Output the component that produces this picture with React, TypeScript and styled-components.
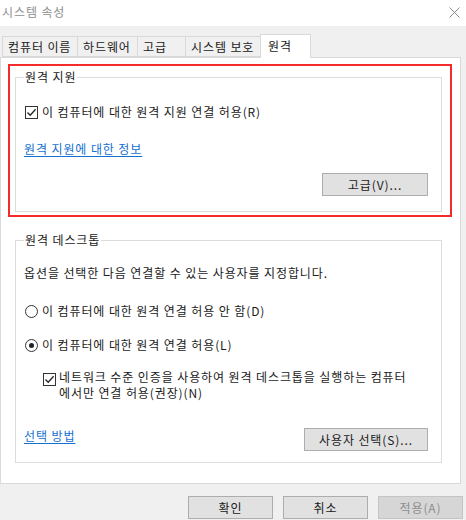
import React from "react";
import styled, { createGlobalStyle } from "styled-components";

const Global = createGlobalStyle`
  html, body { margin: 0; padding: 0; }
  body {
    width: 466px;
    height: 520px;
    overflow: hidden;
    background: #f0f0f0;
    font-family: "Noto Sans CJK KR", "Noto Sans", sans-serif;
    font-size: 12px;
    letter-spacing: 0.9px;
    color: #1a1a1a;
  }
  * { box-sizing: border-box; }
`;

const Window = styled.div`
  width: 466px;
  height: 520px;
  display: flex;
  flex-direction: column;
  background: #f0f0f0;
  overflow: hidden;
`;

const TitleBar = styled.div`
  height: 26px;
  flex: none;
  background: #ffffff;
  display: flex;
  align-items: center;
  justify-content: space-between;
  padding: 0 6px 2px 2px;
  color: #8f8f8f;
  line-height: 16px;
`;

const Body = styled.div`
  display: flex;
  flex-direction: column;
  padding-top: 8px;
`;

const TabStrip = styled.div`
  display: flex;
  align-items: flex-end;
  padding-left: 2px;
  height: 23px;
`;

const Tab = styled.div<{ $w: number; $active?: boolean }>`
  width: ${(p) => p.$w}px;
  height: ${(p) => (p.$active ? 24 : 21)}px;
  margin-left: -1px;
  margin-bottom: ${(p) => (p.$active ? -1 : 0)}px;
  padding: 0 0 ${(p) => (p.$active ? 2 : 0)}px ${(p) => (p.$active ? 7 : 5)}px;
  border: 1px solid #d9d9d9;
  border-bottom: ${(p) => (p.$active ? "none" : "1px solid #d9d9d9")};
  background: ${(p) => (p.$active ? "#ffffff" : "#f0f0f0")};
  position: ${(p) => (p.$active ? "relative" : "static")};
  display: flex;
  align-items: center;
  line-height: 16px;
  white-space: nowrap;
  &:first-child { margin-left: 0; }
`;

const Panel = styled.div`
  width: 461px;
  height: 427px;
  background: #ffffff;
  border: 1px solid #d9d9d9;
  padding: 6px 0 0 7px;
  display: flex;
  flex-direction: column;
`;

const Highlight = styled.div`
  width: 444px;
  border: 2px solid #f52b2b;
  padding: 3px 8px 3px 5px;
`;

const Group = styled.fieldset<{ $mt?: number; $pb: number }>`
  width: 427px;
  margin: ${(p) => p.$mt ?? 0}px 0 0 ${(p) => (p.$mt ? 7 : 0)}px;
  padding: 0 13px ${(p) => p.$pb}px 8px;
  border: 1px solid #dcdcdc;
  display: flex;
  flex-direction: column;
  min-width: 0;
`;

const Legend = styled.legend`
  padding: 0 1px;
  line-height: 16px;
`;

const Row = styled.div<{ $mt: number; $indent?: number }>`
  display: flex;
  align-items: center;
  gap: 4px;
  margin-top: ${(p) => p.$mt}px;
  margin-left: ${(p) => p.$indent ?? 1}px;
  line-height: 16px;
  white-space: nowrap;
`;

const TopRow = styled(Row)`
  align-items: flex-start;
  gap: 3px;
  white-space: normal;
`;

const Text = styled.p<{ $mt: number }>`
  margin: ${(p) => p.$mt}px 0 0 0;
  line-height: 16px;
  white-space: nowrap;
`;

const LinkText = styled.a<{ $mt?: number; $pb?: number }>`
  display: block;
  margin-top: ${(p) => p.$mt ?? 0}px;
  padding-bottom: ${(p) => p.$pb ?? 0}px;
  line-height: 16px;
  color: #1570d0;
  text-decoration: underline;
  text-underline-offset: 2px;
  cursor: pointer;
  align-self: flex-start;
`;

const Box = styled.span<{ $round?: boolean; $mt?: number }>`
  flex: none;
  width: 13px;
  height: 13px;
  margin-top: ${(p) => p.$mt ?? 0}px;
  border: 1px solid #333333;
  border-radius: ${(p) => (p.$round ? "50%" : "0")};
  background: #ffffff;
  display: flex;
  align-items: center;
  justify-content: center;
`;

const Dot = styled.span`
  width: 5px;
  height: 5px;
  border-radius: 50%;
  background: #222222;
`;

const Button = styled.button<{ $w: number; $disabled?: boolean }>`
  width: ${(p) => p.$w}px;
  height: 23px;
  padding: 0;
  border: 1px solid ${(p) => (p.$disabled ? "#c4c4c4" : "#adadad")};
  background: ${(p) => (p.$disabled ? "#d6d6d6" : "#e1e1e1")};
  color: ${(p) => (p.$disabled ? "#8d8d8d" : "#1a1a1a")};
  font-family: inherit;
  font-size: 12px;
  letter-spacing: inherit;
  line-height: 16px;
  flex: none;
`;

const ButtonRow = styled.div<{ $mt: number }>`
  display: flex;
  justify-content: flex-end;
  margin-top: ${(p) => p.$mt}px;
`;

const SplitRow = styled.div<{ $mt: number }>`
  display: flex;
  justify-content: space-between;
  align-items: flex-end;
  margin-top: ${(p) => p.$mt}px;
`;

const Footer = styled.div`
  display: flex;
  justify-content: flex-end;
  gap: 10px;
  padding-right: 3px;
  margin-top: 12px;
`;

const Check = () => (
  <svg width="11" height="11" viewBox="0 0 11 11">
    <path d="M1.5 5.5 L4.2 8.3 L9.6 2.2" fill="none" stroke="#222" strokeWidth="1.3" />
  </svg>
);

const CloseIcon = () => (
  <svg width="11" height="11" viewBox="0 0 11 11">
    <path d="M0.5 0.5 L10.5 10.5 M10.5 0.5 L0.5 10.5" stroke="#8a8a8a" strokeWidth="1" />
  </svg>
);

export default function App() {
  return (
    <>
      <Global />
      <Window>
        <TitleBar>
          <span>시스템 속성</span>
          <CloseIcon />
        </TitleBar>
        <Body>
          <TabStrip>
            <Tab $w={76}>컴퓨터 이름</Tab>
            <Tab $w={61}>하드웨어</Tab>
            <Tab $w={49}>고급</Tab>
            <Tab $w={76}>시스템 보호</Tab>
            <Tab $w={51} $active>원격</Tab>
          </TabStrip>
          <Panel>
            <Highlight>
              <Group $pb={15}>
                <Legend>원격 지원</Legend>
                <Row $mt={19}>
                  <Box><Check /></Box>
                  <span>이 컴퓨터에 대한 원격 지원 연결 허용(R)</span>
                </Row>
                <LinkText $mt={21}>원격 지원에 대한 정보</LinkText>
                <ButtonRow $mt={16}>
                  <Button $w={106}>고급(V)...</Button>
                </ButtonRow>
              </Group>
            </Highlight>
            <Group $mt={15} $pb={11}>
              <Legend>원격 데스크톱</Legend>
              <Text $mt={17}>옵션을 선택한 다음 연결할 수 있는 사용자를 지정합니다.</Text>
              <Row $mt={22}>
                <Box $round />
                <span>이 컴퓨터에 대한 원격 연결 허용 안 함(D)</span>
              </Row>
              <Row $mt={18}>
                <Box $round><Dot /></Box>
                <span>이 컴퓨터에 대한 원격 연결 허용(L)</span>
              </Row>
              <TopRow $mt={16} $indent={19}>
                <Box $mt={4}><Check /></Box>
                <span>
                  네트워크 수준 인증을 사용하여 원격 데스크톱을 실행하는 컴퓨터
                  <br />
                  에서만 연결 허용(권장)(N)
                </span>
              </TopRow>
              <SplitRow $mt={27}>
                <LinkText $pb={2}>선택 방법</LinkText>
                <Button $w={124}>사용자 선택(S)...</Button>
              </SplitRow>
            </Group>
          </Panel>
          <Footer>
            <Button $w={85}>확인</Button>
            <Button $w={85}>취소</Button>
            <Button $w={85} $disabled>적용(A)</Button>
          </Footer>
        </Body>
      </Window>
    </>
  );
}
